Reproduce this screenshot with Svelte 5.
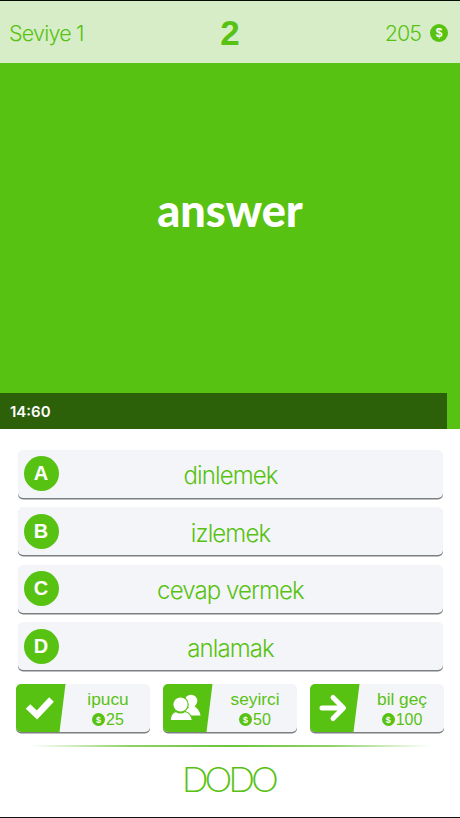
<script lang="ts">
  const level = 'Seviye 1';
  const question = 2;
  const coins = 205;
  const word = 'answer';
  const time = '14:60';
  /** Share of the bar that is still left on the clock, in percent. */
  const remaining = 97.2;

  const answers = [
    { key: 'A', text: 'dinlemek' },
    { key: 'B', text: 'izlemek' },
    { key: 'C', text: 'cevap vermek' },
    { key: 'D', text: 'anlamak' }
  ];

  const jokers = [
    { icon: 'check', label: 'ipucu', price: 25 },
    { icon: 'people', label: 'seyirci', price: 50 },
    { icon: 'arrow', label: 'bil geç', price: 100 }
  ];
</script>

{#snippet coin()}
  <span class="coin">$</span>
{/snippet}

<main class="screen">
  <header>
    <span class="level">{level}</span>
    <strong>{question}</strong>
    <span class="coins"><span>{coins}</span>{@render coin()}</span>
  </header>

  <section class="board">
    <div class="word"><span>{word}</span></div>
    <div class="timer" style="width: {remaining}%">{time}</div>
  </section>

  <section class="answers">
    {#each answers as answer}
      <button type="button" class="answer">
        <span class="key">{answer.key}</span>
        <span class="text">{answer.text}</span>
      </button>
    {/each}
  </section>

  <section class="jokers">
    {#each jokers as joker}
      <button type="button" class="joker">
        <svg class="icon" viewBox="0 0 50 48">
          <path class="tab" d="M0 0H49.500L43.500 48H0Z" />
          {#if joker.icon === 'check'}
            <path class="stroke check" d="M12 22.500L21 31L35.500 15.500" />
          {:else if joker.icon === 'people'}
            <g class="person">
              <circle cx="28" cy="17" r="6.300" />
              <path d="M19 31.500C20 26 23 24 27 23L31 22C34 24 37 27 37.500 31.500Z" />
            </g>
            <g class="person front">
              <circle cx="17.500" cy="20.500" r="7.700" />
              <path d="M7 36.500C7.500 31 9.500 28.500 13 27.500C16 29.500 19 29.500 22 27.500C26 28.500 28.500 31 29.500 36.500Z" />
            </g>
          {:else}
            <path class="stroke" d="M12 24H33M23 13.500L33.500 24L23 34.500" />
          {/if}
        </svg>
        <span class="info">
          <span class="label">{joker.label}</span>
          <span class="price">{@render coin()}{joker.price}</span>
        </span>
      </button>
    {/each}
  </section>

  <div class="divider"></div>
  <footer>DODO</footer>
</main>

<style>
  :global(body) { background: #fff; }
  .screen {
    --green: #58c212;
    display: flex;
    flex-direction: column;
    box-sizing: border-box;
    width: 460px;
    height: 818px;
    border-top: 1px solid #050f02;
    border-bottom: 1px solid #111;
    overflow: hidden;
    background: #fefffe;
    color: var(--green);
    font-family: Inter, "Liberation Sans", sans-serif;
  }
  header {
    display: grid;
    grid-template-columns: 1fr auto 1fr;
    align-items: center;
    box-sizing: border-box;
    height: 62px;
    padding: 2px 12px 0 9px;
    background: #d7edc8;
    font-size: 21.500px;
    font-weight: 300;
  }
  header strong {
    padding: 0 0 1px 3px;
    font-family: "Liberation Sans", sans-serif;
    font-size: 35px;
    font-weight: 700;
    line-height: 40px;
  }
  .level { letter-spacing: -0.8px; }
  .coins {
    display: flex;
    align-items: center;
    justify-content: flex-end;
    gap: 9px;
    letter-spacing: -1px;
  }
  .coin {
    display: flex;
    align-items: center;
    justify-content: center;
    width: 18px;
    height: 18px;
    border-radius: 50%;
    background: var(--green);
    color: #fff;
    font: bold 12px "Liberation Sans", sans-serif;
    letter-spacing: 0;
  }
  .board {
    display: flex;
    flex-direction: column;
    height: 366px;
    background: var(--green);
    color: #fff;
  }
  .word {
    display: flex;
    flex: 1;
    align-items: center;
    justify-content: center;
    padding-bottom: 36px;
    font-family: Lato, sans-serif;
    font-size: 45px;
    font-weight: 900;
  }
  .timer {
    box-sizing: border-box;
    height: 36px;
    padding-left: 10px;
    background: #2c610a;
    font: 600 15px/37px Inter, sans-serif;
  }
  .answers {
    display: flex;
    flex-direction: column;
    gap: 9.500px;
    padding: 20.500px 17px 0 18px;
  }
  button {
    border: 0;
    padding: 0;
    color: inherit;
    font-family: inherit;
    background: #f4f5f9;
    border-radius: 5px;
    box-shadow: 0 1.500px 0 #7c7f80;
  }
  .answer {
    display: grid;
    grid-template-columns: 35px 1fr 35px;
    align-items: center;
    height: 48px;
    padding: 0 5.500px;
    font-size: 24px;
    font-weight: 300;
  }
  .text {
    padding-top: 4px;
    letter-spacing: -0.9px;
  }
  .key {
    height: 35px;
    border-radius: 50%;
    background: var(--green);
    color: #fff;
    font: bold 20px/35px "Liberation Sans", sans-serif;
  }
  .jokers {
    display: grid;
    grid-template-columns: repeat(3, 1fr);
    gap: 13px;
    padding: 14px 16px 0;
  }
  .joker {
    display: flex;
    height: 48px;
    overflow: hidden;
  }
  .icon { width: 50px; height: 48px; }
  .tab { fill: var(--green); }
  .stroke {
    fill: none;
    stroke: #fff;
    stroke-width: 5;
    stroke-linecap: round;
    stroke-linejoin: round;
  }
  .check {
    stroke-width: 6.500;
    stroke-linecap: butt;
    stroke-linejoin: miter;
  }
  .person { fill: #fff; }
  .front {
    stroke: var(--green);
    stroke-width: 1.200;
  }
  .info {
    display: flex;
    flex: 1;
    flex-direction: column;
    align-items: center;
    font-family: "Liberation Sans", sans-serif;
    font-size: 17.300px;
    font-weight: 400;
  }
  .label { line-height: 20px; margin-top: 5px; }
  .price {
    display: flex;
    align-items: center;
    gap: 1px;
    font-size: 16px;
    line-height: 21px;
  }
  .price .coin {
    width: 13px;
    height: 13px;
    font-size: 9px;
  }
  .divider {
    height: 2px;
    margin: 12.500px 30px 0;
    background: linear-gradient(90deg, transparent, #8ed267 25%, #6bc53a 50%, #8ed267 75%, transparent);
  }
  footer {
    margin-top: 11px;
    text-align: center;
    font: 300 34.500px/42px Lato, sans-serif;
    letter-spacing: -3.500px;
    text-indent: -3px;
  }
</style>
